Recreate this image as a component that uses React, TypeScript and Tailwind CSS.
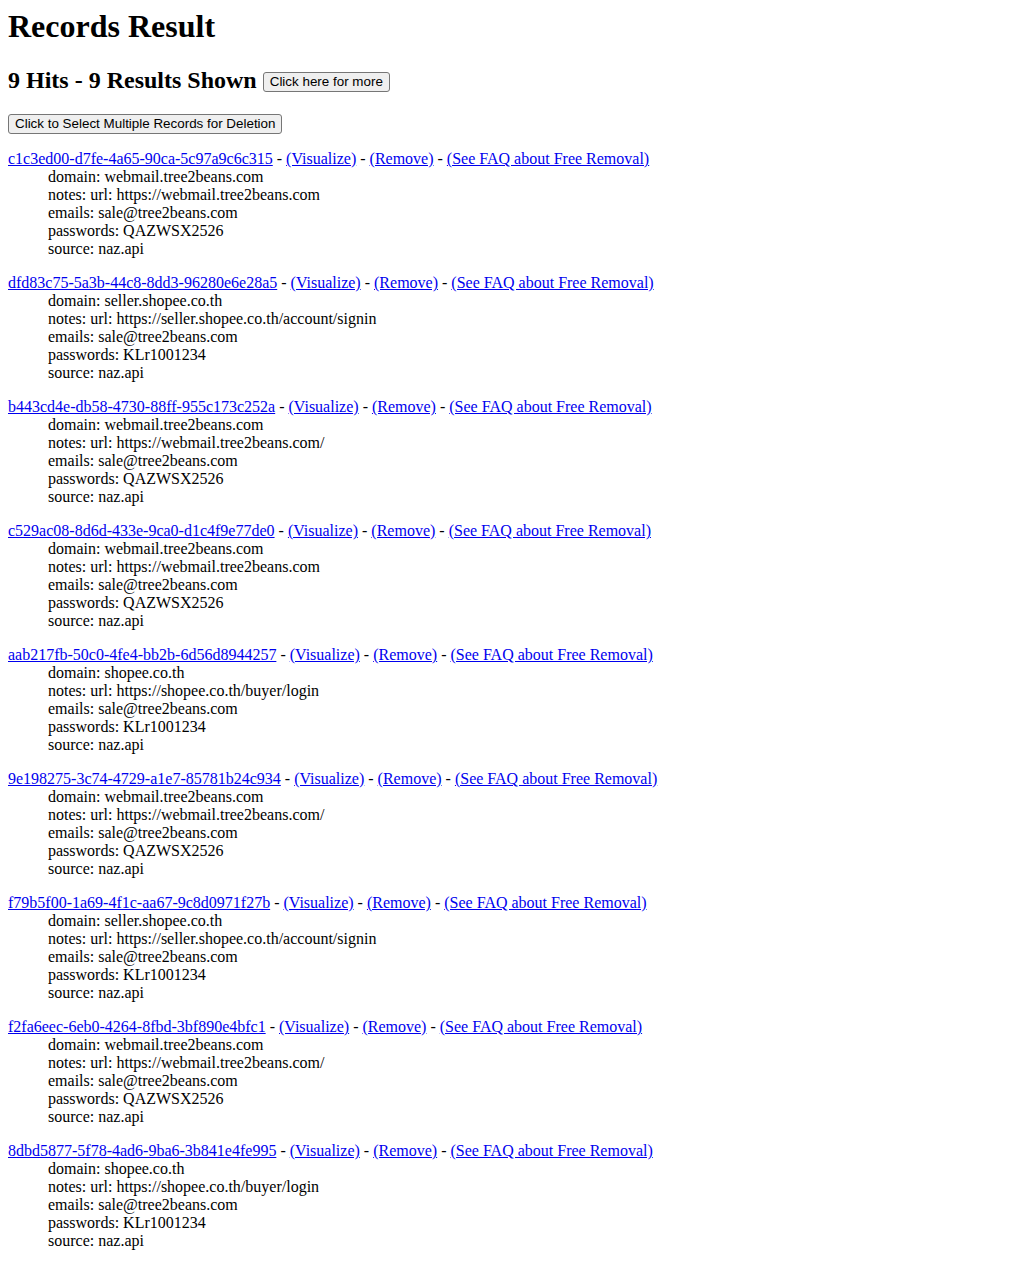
const records = [
  { id: "c1c3ed00-d7fe-4a65-90ca-5c97a9c6c315", domain: "webmail.tree2beans.com", url: "https://webmail.tree2beans.com", password: "QAZWSX2526" },
  { id: "dfd83c75-5a3b-44c8-8dd3-96280e6e28a5", domain: "seller.shopee.co.th", url: "https://seller.shopee.co.th/account/signin", password: "KLr1001234" },
  { id: "b443cd4e-db58-4730-88ff-955c173c252a", domain: "webmail.tree2beans.com", url: "https://webmail.tree2beans.com/", password: "QAZWSX2526" },
  { id: "c529ac08-8d6d-433e-9ca0-d1c4f9e77de0", domain: "webmail.tree2beans.com", url: "https://webmail.tree2beans.com", password: "QAZWSX2526" },
  { id: "aab217fb-50c0-4fe4-bb2b-6d56d8944257", domain: "shopee.co.th", url: "https://shopee.co.th/buyer/login", password: "KLr1001234" },
  { id: "9e198275-3c74-4729-a1e7-85781b24c934", domain: "webmail.tree2beans.com", url: "https://webmail.tree2beans.com/", password: "QAZWSX2526" },
  { id: "f79b5f00-1a69-4f1c-aa67-9c8d0971f27b", domain: "seller.shopee.co.th", url: "https://seller.shopee.co.th/account/signin", password: "KLr1001234" },
  { id: "f2fa6eec-6eb0-4264-8fbd-3bf890e4bfc1", domain: "webmail.tree2beans.com", url: "https://webmail.tree2beans.com/", password: "QAZWSX2526" },
  { id: "8dbd5877-5f78-4ad6-9ba6-3b841e4fe995", domain: "shopee.co.th", url: "https://shopee.co.th/buyer/login", password: "KLr1001234" },
];

const linkCls = "text-[#0000ee] underline";
const btnCls =
  "inline-block font-['Liberation_Sans',Arial,sans-serif] font-normal text-[13.4px] leading-[16px] px-[6px] py-[1px] bg-[#efefef] border border-[#767676] rounded-[3px] text-black";

function Record({ r }: { r: (typeof records)[number] }) {
  return (
    <div className="mb-4">
      <div>
        <a href="#" className={linkCls}>{r.id}</a>
        {" - "}
        <a href="#" className={linkCls}>(Visualize)</a>
        {" - "}
        <a href="#" className={linkCls}>(Remove)</a>
        {" - "}
        <a href="#" className={linkCls}>(See FAQ about Free Removal)</a>
      </div>
      <div className="pl-10">
        <div>domain: {r.domain}</div>
        <div>notes: url: {r.url}</div>
        <div>emails: sale@tree2beans.com</div>
        <div>passwords: {r.password}</div>
        <div>source: naz.api</div>
      </div>
    </div>
  );
}

export default function App() {
  return (
    <div className="bg-white text-black px-2 pt-2 font-['Liberation_Serif','Times_New_Roman',serif] text-[16px] leading-[18px]">
      {/* Header */}
      <h1 className="text-[32px] font-bold leading-[36px]">Records Result</h1>
      <h2 className="mt-[23px] text-[24px] font-bold leading-[27px]">
        9 Hits - 9 Results Shown{" "}
        <button className={`${btnCls} align-[2px]`}>Click here for more</button>
      </h2>
      <div className="mt-[20px]">
        <button className={`${btnCls} align-baseline`}>Click to Select Multiple Records for Deletion</button>
      </div>

      {/* Records */}
      <div className="mt-4">
        {records.map((r) => (
          <Record key={r.id} r={r} />
        ))}
      </div>
    </div>
  );
}
